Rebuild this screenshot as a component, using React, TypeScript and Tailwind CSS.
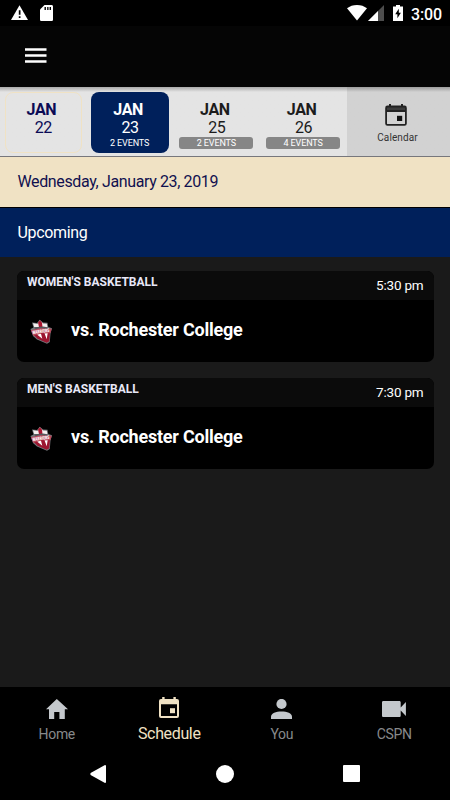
import React from "react";
import clsx from "clsx";

const days = [
  { month: "JAN", day: 22, state: "today" },
  { month: "JAN", day: 23, events: "2 EVENTS", state: "selected" },
  { month: "JAN", day: 25, events: "2 EVENTS", state: "default" },
  { month: "JAN", day: 26, events: "4 EVENTS", state: "default" },
];

const games = [
  { sport: "WOMEN'S BASKETBALL", time: "5:30 pm", title: "vs. Rochester College" },
  { sport: "MEN'S BASKETBALL", time: "7:30 pm", title: "vs. Rochester College" },
];

const tabs = [
  { label: "Home", icon: HomeIcon },
  { label: "Schedule", icon: ScheduleIcon, active: true },
  { label: "You", icon: PersonIcon },
  { label: "CSPN", icon: VideoIcon },
];

function HomeIcon() {
  return (
    <svg width="22" height="20" viewBox="0 0 22 20" fill="currentColor">
      <path d="M8.2 20v-7h5.2v7h5.4v-9.8H22L10.8 0 0 10.2h3V20z" />
    </svg>
  );
}

function ScheduleIcon() {
  return (
    <svg width="20" height="21" viewBox="0 0 20 21" fill="currentColor">
      <path
        fillRule="evenodd"
        d="M3.2 0h2.4v1.9h8.8V0h2.4v1.9H18a2 2 0 0 1 2 2V19a2 2 0 0 1-2 2H2a2 2 0 0 1-2-2V3.9a2 2 0 0 1 2-2h1.2zM2 7.2V19h16V7.2z"
      />
      <path d="M11 11.2h5v5h-5z" />
    </svg>
  );
}

function PersonIcon() {
  return (
    <svg width="21" height="20" viewBox="0 0 21 20" fill="currentColor">
      <circle cx="10.5" cy="5" r="5.1" />
      <path d="M0 20v-2.4c0-3.4 5-5.2 10.5-5.2S21 14.2 21 17.6V20z" />
    </svg>
  );
}

function VideoIcon() {
  return (
    <svg width="24" height="16" viewBox="0 0 24 16" fill="currentColor">
      <path d="M18.7 6.5V1.3c0-.7-.6-1.3-1.3-1.3H1.3C.6 0 0 .6 0 1.3v13.4c0 .7.6 1.3 1.3 1.3h16.1c.7 0 1.3-.6 1.3-1.3V9.5l5.2 5.5V1z" />
    </svg>
  );
}

function CalendarIcon() {
  return (
    <svg width="22" height="22" viewBox="0 0 22 22">
      <path d="M1 7V3.9C1 3 1.6 2.4 2.5 2.4h17c.9 0 1.5.6 1.5 1.5V7z" fill="#3c3c3c" />
      <path d="M4 0h2v3H4zM16 0h2v3h-2z" fill="#222" />
      <path
        d="M1.1 7V3.9c0-.8.6-1.4 1.4-1.4h17c.8 0 1.4.6 1.4 1.4v15.6c0 .8-.6 1.4-1.4 1.4h-17c-.8 0-1.4-.6-1.4-1.4zh19.8"
        fill="none"
        stroke="#222"
        strokeWidth="1.8"
      />
      <path d="M12 11.8h5.2V17H12z" fill="#111" />
    </svg>
  );
}

function WarriorsLogo() {
  return (
    <svg className="overflow-visible" width="23" height="25" viewBox="0 0 23 25">
      <path
        d="M2 3.5 7 4 9.8.8 13 3.5l4.5.2.8 4.3 3.7 1.3-1.5 5.2-.7 8.5-2.8 1.8L7 20.5 3 17 .5 10l3-1.5z"
        fill="#74777b"
      />
      <path d="m3 4.3 4.5.7L9.8 1.5l3.2 3 3.8.2.7 4.3L4.2 8z" fill="#f4efef" />
      <path d="m8 3.6 2-2.3 2 2.5.5 4.500L9 8z" fill="#a9152e" />
      <path d="m3.5 13 16.7-1-1 10.3-2.6 1.4-9-4L3.8 16z" fill="#9c1630" />
      <path d="m7 15.5 4-.8 1.3 5zM14.5 14.3l3.2-.4-1 6.3z" fill="#fff" />
      <path d="m4.5 8.3 8.5-.8 6 1-1 1.5-7-.5-6 1.2z" fill="#55585c" />
      <path d="m.8 11.3 9-2.1 12 .6-1.5 4.400-9 0-8 2.500z" fill="#b8465a" />
      <text
        x="2.8"
        y="15.2"
        transform="rotate(-8 2.8 15.2)"
        textLength="17"
        lengthAdjust="spacingAndGlyphs"
        fontSize="5"
        fontWeight="900"
        fill="#fff"
        fontFamily="Roboto, sans-serif"
      >
        WARRIORS
      </text>
    </svg>
  );
}

function StatusBar() {
  return (
    <div className="flex h-[26px] shrink-0 items-start justify-between bg-black pl-[11px] pr-[8px] text-white">
      <div className="flex gap-3 pt-[5px]">
        <svg width="17" height="16" viewBox="0 0 17 16">
          <path d="M8.5.3 17 15H0z" fill="#fff" />
          <path d="M7.8 5.3h1.7v4.4H7.8zM7.8 11.3h1.7V13H7.8z" fill="#000" />
        </svg>
        <svg width="13" height="16" viewBox="0 0 13 16">
          <path d="M4.5 0h7c.8 0 1.5.6 1.5 1.4v13c0 .9-.7 1.6-1.5 1.6h-10C.7 16 0 15.3 0 14.4V4.5z" fill="#fff" />
          <path d="M4.5 2h1.4v3H4.5zM7.2 2h1.3v3H7.2zM9.6 2H11v3H9.6z" fill="#000" />
        </svg>
      </div>
      <div className="flex pt-[5px]">
        <svg width="20" height="16" viewBox="0 0 20 16">
          <path d="M10 15.5 0 3.3C2.7 1.2 6.2 0 10 0s7.3 1.2 10 3.3z" fill="#fff" />
        </svg>
        <svg className="ml-[1px]" width="16" height="16" viewBox="0 0 16 16">
          <path d="M16 0v16H0z" fill="#4d4d4d" />
          <path d="M10 6v10H0z" fill="#fff" />
        </svg>
        <svg className="ml-[9px]" width="10" height="16" viewBox="0 0 10 16">
          <path d="M3 0h4v1.5h3V16H0V1.5h3z" fill="#fff" />
          <path d="M5.8 3.8 2.2 9.3h2.2v4l3.5-5.6H5.8z" fill="#000" />
        </svg>
        <span className="ml-[8px] text-[16px] font-medium leading-[19px] tracking-[-0.1px]">3:00</span>
      </div>
    </div>
  );
}

function DateStrip() {
  return (
    <div className="flex h-[70px] shrink-0 border-b border-[#77777c] bg-linear-to-b from-[#aaaaaa] to-[#e4e4e4] to-[5px]">
      {days.map((d) => (
        <div key={d.day} className="h-[69px] w-[86.75px] px-[4.5px] pt-[5px]">
          <div
            className={clsx(
              "flex h-[61px] flex-col items-center rounded-[8px]",
              d.state === "today" && "border border-[#f0e2c4] pt-[8px] text-[#0b0b55]",
              d.state === "selected" && "bg-[#00205b] pt-[9px] text-white",
              d.state === "default" && "pt-[9px] text-[#1c1c1c]"
            )}
          >
            <span className="mr-[4px] text-[16px] font-bold leading-[18px] tracking-[-0.3px]">{d.month}</span>
            <span className="text-[16px] leading-[17px] tracking-[-0.3px]">{d.day}</span>
            {d.events && (
              <span
                className={clsx(
                  "mr-[1px] mt-[1px] w-[74px] rounded-[3px] text-center text-[9px] leading-[12px] tracking-[-0.1px] text-white",
                  d.state === "default" && "bg-[#868686]"
                )}
              >
                {d.events}
              </span>
            )}
          </div>
        </div>
      ))}
      <div className="flex flex-1 flex-col items-center bg-black/8 pr-[2px] pt-[17px] text-[#222]">
        <div className="mr-[3px]">
          <CalendarIcon />
        </div>
        <span className="mt-[5px] text-[10px] leading-[14px] tracking-[0.1px] text-[#333]">Calendar</span>
      </div>
    </div>
  );
}

function GameCard({ sport, time, title }: { sport: string; time: string; title: string }) {
  return (
    <div className="h-[91px] overflow-hidden rounded-[7px] bg-black text-white">
      <div className="flex h-[29px] justify-between bg-[#0b0b0b] pl-[10.5px] pr-[10px]">
        <span className="pt-[3px] text-[12px] font-bold leading-[16px] text-[#e8e8f8]">{sport}</span>
        <span className="pt-[5px] text-[13.5px] leading-[18px] tracking-[-0.2px]">{time}</span>
      </div>
      <div className="flex h-[62px] items-center pl-[13px]">
        <WarriorsLogo />
        <span className="-mt-[2px] ml-[18.5px] text-[18px] font-bold leading-6 tracking-[-0.22px]">{title}</span>
      </div>
    </div>
  );
}

export default function App() {
  return (
    <div className="flex h-[800px] w-[450px] flex-col overflow-hidden bg-[#1a1a1a] font-['Roboto',sans-serif]">
      <StatusBar />
      <header className="flex h-[61px] shrink-0 items-start bg-[#050505] pl-[24.5px] pt-[22px]">
        <svg width="22" height="15" viewBox="0 0 22 15" fill="#fff">
          <path d="M0 .3h21.500v2.400H0zM0 6.300h21.500v2.400H0zM0 12.300h21.500v2.400H0z" />
        </svg>
      </header>
      <DateStrip />
      <div className="flex h-[50px] shrink-0 items-center bg-[#f0e2c4] pl-[17.5px] text-[16px] tracking-[-0.37px] text-[#10104f]">
        Wednesday, January 23, 2019
      </div>
      <div className="flex h-[50px] shrink-0 items-center border-t border-black bg-[#00205b] pl-[17.5px] text-[16px] tracking-[-0.35px] text-white">
        Upcoming
      </div>
      <main className="flex flex-1 flex-col gap-4 px-[16.5px] pt-[14px]">
        {games.map((game) => (
          <GameCard key={game.sport} {...game} />
        ))}
      </main>
      <nav className="flex h-[59px] shrink-0 bg-black">
        {tabs.map(({ label, icon: Icon, active }) => (
          <div
            key={label}
            className={clsx(
              "flex flex-1 flex-col items-center pl-[1px]",
              active ? "text-[#f0e2c4]" : "text-[#c4c8cc]"
            )}
          >
            <div className={clsx("flex items-center", active ? "h-[40px]" : "h-[44px]")}>
              <Icon />
            </div>
            <span
              className={clsx(
                active
                  ? "-mt-[2px] text-[16px] leading-[18px] tracking-[-0.35px]"
                  : "-mt-[6px] text-[14px] leading-[18px] tracking-[-0.35px] text-[#87898b]"
              )}
            >
              {label}
            </span>
          </div>
        ))}
      </nav>
      <div className="flex h-[54px] shrink-0 justify-between bg-black pl-[90px] pr-[90px] pt-[19px]">
        <svg width="16" height="18" viewBox="0 0 16 18" fill="#fff">
          <path d="M15 0q1 0 1 1v16q0 1-1 1L.6 10Q0 9 .6 8z" />
        </svg>
        <div className="size-[18px] rounded-full bg-white" />
        <div className="size-[17px] rounded-[1px] bg-white" />
      </div>
    </div>
  );
}
